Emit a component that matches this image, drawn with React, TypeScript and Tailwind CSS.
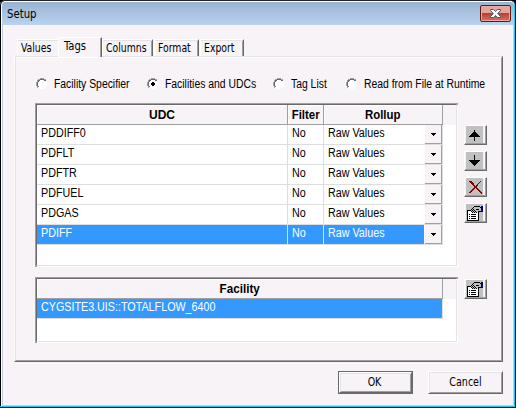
import React from "react";

const sans = "font-['Liberation_Sans',Arial,sans-serif]";
const tahoma = "font-['DejaVu_Sans_Condensed','DejaVu_Sans',sans-serif]";

function Narrow({ children, scale = "scale-x-[0.895]" }: { children: React.ReactNode; scale?: string }) {
  return <span className={`inline-block origin-left text-[12px] whitespace-nowrap ${scale}`}>{children}</span>;
}

function Radio({ label, checked, className }: { label: string; checked?: boolean; className: string }) {
  return (
    <div className={`flex shrink-0 items-center ${className}`}>
      <svg width="12" height="12" viewBox="0 0 12 12" shapeRendering="crispEdges" className="mr-[6px] shrink-0">
        <path d="M4 1h4v1h2v2h1v4h-1v2H8v1H4v-1H2V8H1V4h1V2h2z" fill="#fff" />
        <path d="M4 0h4v1H4zM2 1h2v1H2zM8 1h2v1H8zM1 2h1v2H1zM0 4h1v4H0zM1 8h1v2H1z" fill="#a0a0a0" />
        <path d="M4 1h4v1H4zM2 2h2v1H2zM8 2h2v1H8zM2 3h1v1H2zM1 4h1v4H1zM2 8h1v1H2z" fill="#696969" />
        {checked && <path d="M5 4h2v1h1v2H7v1H5V7H4V5h1z" fill="#000" />}
      </svg>
      <Narrow scale="scale-x-[0.865]">{label}</Narrow>
    </div>
  );
}

function Combo() {
  return (
    <div className="ml-px flex h-[19px] w-[17px] items-center justify-center border-b border-r border-[#a0a0a0] bg-[#f7f3f7]">
      <svg width="5" height="3" shapeRendering="crispEdges"><path d="M0 0h5v1H4v1H3v1H2V2H1V1H0z" /></svg>
    </div>
  );
}

function IconButton({ children }: { children: React.ReactNode }) {
  return (
    <div className="h-5 w-[23px] border border-b-[#696969] border-l-white border-r-[#696969] border-t-white">
      <div className="flex h-full border-b border-r border-[#a0a0a0] bg-[#f7f3f7] pl-px">
        <svg width="17" height="17" viewBox="0 0 17 17" shapeRendering="crispEdges" className="bg-[#c0c0c0]">{children}</svg>
      </div>
    </div>
  );
}

function Properties() {
  return (
    <IconButton>
      <path d="M1 6h12v11H1z" fill="#000" />
      <path d="M2 7h10v9H2z" fill="#fff" />
      <path d="M5 5h1V4h1V3h7v4h-2v1h-2v1H9V8H8v1H7V8H6V7H5z" fill="#c0c0c0" />
      <path d="M8 2h6v1H8zM7 3h1v1H7zM6 4h1v1H6zM5 5h1v1H5zM4 6h1v1H4zM14 3h1v1h-1zM10 5h3v1h-3zM12 7h3v1h-3zM7 5h1v1H7zM8 6h1v1H8zM6 6h1v1H6zM5 7h1v1H5zM7 7h1v1H7zM9 7h1v1H9zM6 8h1v1H6zM8 8h1v1H8zM10 8h1v1h-1zM3 10h1v1H3zM3 12h1v1H3zM5 12h5v1H5zM5 10h5v1H5zM3 14h1v1H3zM5 14h5v1H5z" fill="#000" />
      <path d="M15 2h2v6h-2z" fill="#000084" />
    </IconButton>
  );
}

function Tab({ label, className }: { label: string; className: string }) {
  return (
    <div className={`h-[17px] rounded-t-[1px] border-l border-t border-l-white border-t-white ${className}`}>
      <div className="flex h-full border-t border-[#e3e3e3] pl-[3px] leading-[15px] whitespace-nowrap">
        <span className="origin-left scale-x-[0.9]">{label}</span>
      </div>
    </div>
  );
}

const rows = ["PDDIFF0", "PDFLT", "PDFTR", "PDFUEL", "PDGAS", "PDIFF"];
const panel = "m-px border border-b-[#e3e3e3] border-l-[#696969] border-r-[#e3e3e3] border-t-[#696969] bg-white shadow-[-1px_-1px_#a0a0a0,1px_1px_white,1px_-1px_#a0a0a0,-1px_1px_#a0a0a0]";
const head = "flex h-5 items-center justify-center border-b border-r border-[#a0a0a0] bg-[#f7f3f7] pt-px shadow-[inset_1px_1px_white]";
const rightLine = "border-r border-r-[#696969] shadow-[inset_-1px_0_#a0a0a0]";

export default function App() {
  return (
    <div className={`h-[408px] w-[516px] overflow-hidden bg-black text-[11px] text-black ${sans}`}>
      <div className="flex h-[407px] w-[515px] flex-col rounded-t-[5px] border-b border-r border-t border-b-[#00d3ff] border-r-[#00d3ff] border-t-[#222] bg-[#f7f3f7] shadow-[inset_1px_0_black,inset_2px_0_white,inset_3px_0_#b9d1ea,inset_-1px_0_#b9d1ea,inset_0_-1px_#b9d1ea]">
        <div className="ml-[2px] flex h-[24px] shrink-0 items-start justify-between rounded-t-[4px] border-t border-white bg-linear-to-b from-[#98b4d2] to-[#bad2ee] pl-[5px] pr-[3px] pt-[3px]">
          <span className={`origin-left scale-x-[0.94] pt-px text-[12px] leading-[16px] ${tahoma}`}>Setup</span>
          <div className="flex h-[17px] w-[31px] items-center justify-center rounded-[2px] border border-[#571d1d] bg-linear-to-b from-[#e6a49a] from-45% via-[#bf3926] via-46% to-[#d5715b] shadow-[inset_0_0_0_1px_#e9aaa2]">
            <svg width="13" height="11" viewBox="0 0 13 11">
              <path d="M1.5 1.5h3L6.5 3.6 8.5 1.5h3v1L8.7 5.5l2.8 3v1h-3l-2-2.1-2 2.1h-3v-1l2.8-3-2.8-3z" fill="#fff" stroke="#535666" />
            </svg>
          </div>
        </div>
        <div className={`flex h-[31px] shrink-0 items-end pl-[17px] text-[11.5px] ${tahoma}`}>
          <Tab label="Values" className="w-[41px]" />
          <div className={`relative top-px flex h-5 w-[44px] border-l border-t border-l-white border-t-white bg-[#f7f3f7] pl-[5px] leading-[17px] ${rightLine}`}><span className="origin-left scale-x-[0.97]">Tags</span></div>
          <Tab label="Columns" className={`w-[51px] ${rightLine}`} />
          <Tab label="Format" className={`ml-px w-[45px] ${rightLine}`} />
          <Tab label="Export" className={`ml-px w-[44px] ${rightLine}`} />
        </div>
        <div className="ml-[14px] h-[306px] w-[489px] shrink-0 border border-b-[#696969] border-l-white border-r-[#696969] border-t-[#e3e3e3]">
          <div className="h-full border border-b-[#a0a0a0] border-l-[#e3e3e3] border-r-[#a0a0a0] border-t-white pl-[19px]">
            <div className="flex h-[45px] items-center pl-px pt-[7px]">
              <Radio label="Facility Specifier" className="w-[111px]" />
              <Radio label="Facilities and UDCs" checked className="w-[126px]" />
              <Radio label="Tag List" className="w-[73px]" />
              <Radio label="Read from File at Runtime" className="w-[145px]" />
            </div>
            <div className="flex">
              <div className={`h-[162px] w-[421px] ${panel}`}>
                <div className="flex w-[419px] bg-[#f7f3f7] text-[12px] font-bold">
                  <div className={`w-[251px] ${head}`}>UDC</div>
                  <div className={`w-[36px] ${head}`}><span className="scale-x-[0.95]">Filter</span></div>
                  <div className={`w-[119px] ${head}`}><span className="scale-x-[0.95]">Rollup</span></div>
                </div>
                {rows.map((r, i) => (
                  <div key={r} className={`flex h-5 w-[406px] leading-[17px] ${i === 5 ? "text-white" : ""}`}>
                    <div className={`w-[251px] border-b border-r border-[#dedede] pl-1 ${i === 5 ? "bg-[#3399ff]" : ""}`}><Narrow>{r}</Narrow></div>
                    <div className={`w-[36px] border-b border-r border-[#dedede] pl-1 ${i === 5 ? "bg-[#3399ff]" : ""}`}><Narrow>No</Narrow></div>
                    <div className="flex w-[119px] border-b border-r border-[#dedede]">
                      <div className={`w-[100px] pl-1 ${i === 5 ? "bg-[#3399ff]" : ""}`}><Narrow>Raw Values</Narrow></div>
                      <Combo />
                    </div>
                  </div>
                ))}
              </div>
              <div className="ml-[6px] mt-[22px] flex flex-col gap-[6px]">
                <IconButton>
                  <path d="M8 4h1v2h1v1h1v1h1v1h1v1h1v1H9v4H8v-4H3v-1h1V9h1V8h1V7h1V6h1z" />
                </IconButton>
                <IconButton>
                  <path d="M8 3h1v5h5v1h-1v1h-1v1h-1v1h-1v1H9v1H8v-1H7v-1H6v-1H5v-1H4V9H3V8h5z" />
                </IconButton>
                <IconButton>
                  {[3, 4, 5, 6, 7, 8, 9, 10, 11, 12, 13, 14].map((y) => (
                    <g key={y} fill="#840000">
                      <rect x={y} y={y} width={y < 6 ? 3 : 2} height="1" />
                      <rect x={17 - y} y={y} width={y > 6 ? 2 : 1} height="1" />
                    </g>
                  ))}
                  <path d="M15 15h1v1h-1z" fill="#840000" />
                </IconButton>
                <Properties />
              </div>
            </div>
            <div className="mt-[10px] flex">
              <div className={`h-[64px] w-[421px] ${panel}`}>
                <div className="flex w-[419px] bg-[#f7f3f7] text-[12px] font-bold">
                  <div className={`w-[406px] ${head}`}><span className="scale-x-[0.97]">Facility</span></div>
                </div>
                <div className="h-5 w-[406px] border-b border-r border-[#dedede] bg-[#3399ff] pl-1 leading-[17px] text-white"><Narrow>CYGSITE3.UIS::TOTALFLOW_6400</Narrow></div>
              </div>
              <div className="ml-[6px] mt-[2px]"><Properties /></div>
            </div>
          </div>
        </div>
        <div className={`mt-[9px] flex gap-[15px] pl-[338px] text-[11.5px] ${tahoma}`}>
          <div className="h-[23px] w-[75px] border border-[#696969]">
            <div className="h-full border border-b-[#696969] border-l-white border-r-[#696969] border-t-white pr-[2px] text-center leading-[19px] shadow-[inset_1px_1px_#e3e3e3,inset_-1px_-1px_#a0a0a0]"><div className="scale-x-[0.92]">OK</div></div>
          </div>
          <div className="h-[23px] w-[75px] border border-b-[#696969] border-l-white border-r-[#696969] border-t-white text-center leading-[20px] shadow-[inset_1px_1px_#e3e3e3,inset_-1px_-1px_#a0a0a0]"><div className="scale-x-[0.92]">Cancel</div></div>
        </div>
      </div>
    </div>
  );
}
